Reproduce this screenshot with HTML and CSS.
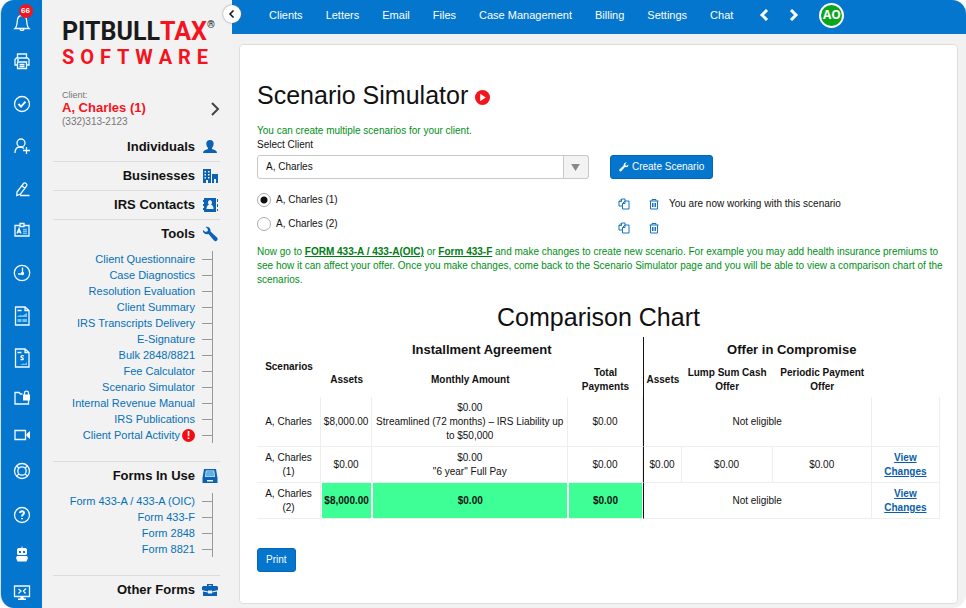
FILE: index.html
```html
<!DOCTYPE html>
<html lang="en">
<head>
<meta charset="utf-8">
<title>Scenario Simulator</title>
<link rel="stylesheet" href="styles.css">
</head>
<body>
<div class="app">
  <nav class="rail" aria-label="Shortcuts">
    <a href="#" class="bell" aria-label="Notifications"><svg viewBox="0 0 20 20"><path d="M3 17.500h14c-1.800-1.500-2-3.500-2.300-7.500C14.500 6.500 12.800 4.500 10 4.500S5.500 6.500 5.300 10C5 14 4.800 16 3 17.500zM8 18c.3 2 3.700 2 4 0M10 4.500V3"/></svg><span class="count">66</span></a>
    <a href="#" aria-label="Print"><svg viewBox="0 0 20 20"><path d="M5.500 7V3h9v4M5.500 14H3V8.500L4.500 7h11L17 8.500V14h-2.500M5.500 11h9v6.500h-9zM7.500 13.500h5M7.500 15.500h5M5 9h2"/></svg></a>
    <a href="#" aria-label="Tasks"><svg viewBox="0 0 20 20"><circle cx="10" cy="10" r="7.500"/><path class="bold" d="M6.500 10l2.500 2.600 4.500-5"/></svg></a>
    <a href="#" aria-label="Add client"><svg viewBox="0 0 20 20"><circle cx="9" cy="7" r="4"/><path d="M3 17c0-4 2-6 5-6 2 0 3 .5 4 1.500M11 14.500h7M14.500 11v7"/></svg></a>
    <a href="#" aria-label="Edit"><svg viewBox="0 0 20 20"><path d="M5 13l6.500-8.500c1.500-1.500 4.500.5 3 2.700L8.500 15l-3.700 1.500zM8 16.500h9.500M10 7l3 2.300"/></svg></a>
    <a href="#" aria-label="ID badge"><svg viewBox="0 0 20 20"><path d="M8 5.500H3V16h14V5.500h-5M8 3.500h4v3H8zM5 13.500l2-5 2 5M6 12h2"/><path class="faint" d="M11 9.500h4M11 11.500h4M11 13.500h4"/></svg></a>
    <a href="#" aria-label="Time"><svg viewBox="0 0 20 20"><circle cx="10" cy="10" r="7.700"/><path d="M10.500 4.500V11H6"/><circle cx="10.500" cy="10.500" r="1"/></svg></a>
    <a href="#" aria-label="Reports"><svg viewBox="0 0 20 20"><path d="M3.500 1h9.500l4 3.500V19H3.500zM13 1v3.500h4M5.500 4.500h4"/><path class="tint" d="M5.500 10l3-1 2 .5L15 7v4H5.500zM5.500 13h4v3h-4zM10.500 13h4.500v3h-4.500z"/></svg></a>
    <a href="#" aria-label="Billing report"><svg viewBox="0 0 20 20"><path d="M3.500 1h9.500l4 3.500V19H3.500zM13 1v3.500h4M12 8c-3-1.200-4 1-2 1.700s1.800 2.600-1.500 1.800M5.500 4.500h4"/><path class="tint" d="M8 17l3-1.500 2 .5 2-2v3z"/></svg></a>
    <a href="#" aria-label="Secure folder"><svg viewBox="0 0 20 20"><path d="M10.500 6H8.500L7 4.500H3V16h13.500v-4"/><path class="solid" d="M11 6.500h7v6h-7z"/><path d="M12.500 7V5c0-2.500 4-2.500 4 0v2"/></svg></a>
    <a href="#" aria-label="Video"><svg viewBox="0 0 20 20"><path d="M3 5.500h10.500v9H3z"/><path class="solid" d="M14.500 9l3.500-3v8l-3.500-3z"/></svg></a>
    <a href="#" aria-label="Support"><svg viewBox="0 0 20 20"><circle cx="10" cy="10" r="7.500"/><circle cx="10" cy="10" r="4.200"/><path d="M4.500 5l2.500 2M15.500 5L13 7M4.500 15L7 13M15.500 15L13 13"/></svg></a>
    <a href="#" aria-label="Help"><svg viewBox="0 0 20 20"><circle cx="10" cy="10" r="7.500"/><path class="bold" d="M8 8c.2-2.500 4.300-2.300 4 .2-.2 1.500-2 1.400-2 3.300M10 13v1.200"/></svg></a>
    <a href="#" aria-label="Assistant"><svg viewBox="0 0 20 20"><path class="solid" fill-rule="evenodd" d="M9.500 2.500h1V4H14l1 1.500v4.500l-1 1H6l-1-1V5.500L6 4h3.500zM7 7v2h2V7zM11 7v2h2V7z"/><path class="solid" d="M5 12h10l1 2-1.500 3.500h-9L4 14z"/></svg></a>
    <a href="#" aria-label="Screen share"><svg viewBox="0 0 20 20"><path d="M2.500 4h15v10.500h-15zM6.500 7l2.500 2-2.500 2.500M14 6.500L11.500 9l2 2.500"/><path class="solid" d="M9 14.500h2l1 2h2V18H6v-1.500h2z"/></svg></a>
  </nav>

  <aside class="sidebar">
    <button class="collapse" type="button" aria-label="Collapse menu"><svg viewBox="0 0 10 10"><path d="M6.500 1.500L3 5l3.500 3.500"/></svg></button>
    <div class="logo">
      <div class="logo-top">PITBULL<span class="red">TAX</span><sup>®</sup></div>
      <div class="logo-sub" role="img" aria-label="Software"><span>S</span><span>O</span><span>F</span><span>T</span><span>W</span><span>A</span><span>R</span><span>E</span></div>
    </div>
    <a href="#" class="client">
      <span class="client-text"><span class="client-label">Client:</span><strong>A, Charles (1)</strong><span class="phone">(332)313-2123</span></span>
      <svg class="go" viewBox="0 0 10 14"><path d="M2 1l6 6-6 6"/></svg>
    </a>
    <section><h2>Individuals <svg viewBox="0 0 16 16"><path d="M8 1c5 0 4 6 2 8v1c3 1 5 1.500 5 4H1c0-2.500 2-3 5-4V9C4 7 3 1 8 1z"/></svg></h2></section>
    <section><h2>Businesses <svg viewBox="0 0 16 16"><path fill-rule="evenodd" d="M1 1h8v14H6v-3H4v3H1zM2.500 3v1.500H4V3zM6 3v1.500h1.500V3zM2.500 6v1.500H4V6zM6 6v1.500h1.500V6zM2.500 9v1.500H4V9zM6 9v1.500h1.500V9zM10 6h6v9h-2v-4h-2v4h-2z"/></svg></h2></section>
    <section><h2>IRS Contacts <svg viewBox="0 0 16 16"><path fill-rule="evenodd" d="M2 1h12v14H2v-2H1v-2h1V9H1V7h1V5H1V3h1zM8 3a2.500 2.500 0 0 0-1 4.500C5 8.500 4.500 10 4.500 12h7c0-2-.5-3.500-2.500-4.500A2.500 2.500 0 0 0 8 3z"/><path d="M15 2h1v3h-1zM15 7h1v3h-1zM15 12h1v2h-1z"/></svg></h2></section>
    <section>
      <h2>Tools <svg viewBox="0 0 16 16"><path d="M1 4l2.500 2L6 5 5.500 2.500 3.500 1C6 0 9 2 8.500 5.500l6.500 6c2 2-1 5-3 3L6.500 8C3.500 9 .5 7 1 4z"/></svg></h2>
      <ul>
        <li><a href="#">Client Questionnaire</a></li>
        <li><a href="#">Case Diagnostics</a></li>
        <li><a href="#">Resolution Evaluation</a></li>
        <li><a href="#">Client Summary</a></li>
        <li><a href="#">IRS Transcripts Delivery</a></li>
        <li><a href="#">E-Signature</a></li>
        <li><a href="#">Bulk 2848/8821</a></li>
        <li><a href="#">Fee Calculator</a></li>
        <li><a href="#">Scenario Simulator</a></li>
        <li><a href="#">Internal Revenue Manual</a></li>
        <li><a href="#">IRS Publications</a></li>
        <li><a href="#">Client Portal Activity</a><span class="alert">!</span></li>
      </ul>
    </section>
    <section>
      <h2>Forms In Use <svg viewBox="0 0 16 16"><path fill-rule="evenodd" d="M2 1h12l1.500 9v5H.5v-5zM3.800 2.500L3 9h10l-.8-6.500zM5 12v1.500h6V12z"/><path class="sheet" d="M4.500 3h7l.8 5.500H3.700z"/></svg></h2>
      <ul>
        <li><a href="#">Form 433-A / 433-A (OIC)</a></li>
        <li><a href="#">Form 433-F</a></li>
        <li><a href="#">Form 2848</a></li>
        <li><a href="#">Form 8821</a></li>
      </ul>
    </section>
    <section><h2>Other Forms <svg viewBox="0 0 16 16"><path fill-rule="evenodd" d="M5 4V2h6v2h4l1 1v3l-6 1.500V8.500H6v1L0 8V5l1-1zM6.500 4h3V3.200h-3zM1 9.500l5 1v1h4v-1l5-1V14H1z"/></svg></h2></section>
  </aside>

  <div class="content">
    <header class="topbar">
      <a href="#">Clients</a><a href="#">Letters</a><a href="#">Email</a><a href="#">Files</a><a href="#">Case Management</a><a href="#">Billing</a><a href="#">Settings</a><a href="#">Chat</a>
      <div class="tools">
        <button type="button" class="arrow" aria-label="Previous"><svg viewBox="0 0 10 12"><path d="M8 1L3 6l5 5"/></svg></button>
        <button type="button" class="arrow" aria-label="Next"><svg viewBox="0 0 10 12"><path d="M2 1l5 5-5 5"/></svg></button>
        <button type="button" class="avatar">AO</button>
      </div>
    </header>
    <main class="panel">
      <h1>Scenario Simulator <svg viewBox="0 0 16 16"><circle cx="8" cy="8" r="8"/><path d="M5.500 4l6 4-6 4z"/></svg></h1>
      <p class="note">You can create multiple scenarios for your client.</p>
      <label for="client">Select Client</label>
      <div class="picker">
        <div class="select">
          <select id="client"><option>A, Charles</option></select>
          <span class="drop"><svg viewBox="0 0 10 8"><path d="M0 0h10L5 8z"/></svg></span>
        </div>
        <button type="button" class="btn"><svg viewBox="0 0 16 16"><path d="M15 4l-2.500 2L10 5l.5-2.500L12.500 1C10 0 7 2 7.500 5.500l-6.500 6c-2 2 1 5 3 3L9.500 8C12.500 9 15.500 7 15 4z"/></svg>Create Scenario</button>
      </div>
      <div class="scenarios">
        <div class="choices">
          <label><input type="radio" name="scenario" checked>A, Charles (1)</label>
          <label><input type="radio" name="scenario">A, Charles (2)</label>
        </div>
        <div class="actions">
          <div class="action-row">
            <button type="button" aria-label="Copy scenario 1"><svg viewBox="0 0 12 12"><path d="M4.500 8H1V3.500L3.500 1H7v2M3.500 1v2.500H1M4.500 5.500L7 3h4v8H4.500zM7 3v2.500H4.500"/></svg></button>
            <button type="button" aria-label="Delete scenario 1"><svg viewBox="0 0 12 12"><path d="M1.500 3h9M4 3V1.500h4V3M2.500 3v8h7V3M4.500 5v4M6 5v4M7.500 5v4"/></svg></button>
            <span>You are now working with this scenario</span>
          </div>
          <div class="action-row">
            <button type="button" aria-label="Copy scenario 2"><svg viewBox="0 0 12 12"><path d="M4.500 8H1V3.500L3.500 1H7v2M3.500 1v2.500H1M4.500 5.500L7 3h4v8H4.500zM7 3v2.500H4.500"/></svg></button>
            <button type="button" aria-label="Delete scenario 2"><svg viewBox="0 0 12 12"><path d="M1.500 3h9M4 3V1.500h4V3M2.500 3v8h7V3M4.500 5v4M6 5v4M7.500 5v4"/></svg></button>
          </div>
        </div>
      </div>
      <p class="note wide">Now go to <a href="#">FORM 433-A / 433-A(OIC)</a> or <a href="#">Form 433-F</a> and make changes to create new scenario. For example you may add health insurance premiums to see how it can affect your offer. Once you make changes, come back to the Scenario Simulator page and you will be able to view a comparison chart of the scenarios.</p>
      <h2 class="chart-title">Comparison Chart</h2>
      <table>
        <colgroup><col class="c-name"><col class="c-assets"><col class="c-monthly"><col class="c-total"><col class="c-offer"><col class="c-lump"><col class="c-periodic"><col class="c-view"></colgroup>
        <thead>
          <tr class="groups"><th rowspan="2">Scenarios</th><th colspan="3" class="group">Installment Agreement</th><th colspan="4" class="group divide">Offer in Compromise</th></tr>
          <tr class="heads"><th>Assets</th><th>Monthly Amount</th><th>Total Payments</th><th class="divide">Assets</th><th>Lump Sum Cash Offer</th><th>Periodic Payment Offer</th><td></td></tr>
        </thead>
        <tbody>
          <tr><td>A, Charles</td><td>$8,000.00</td><td>$0.00<br>Streamlined (72 months) – IRS Liability up to $50,000</td><td>$0.00</td><td colspan="3" class="divide">Not eligible</td><td></td></tr>
          <tr><td>A, Charles (1)</td><td>$0.00</td><td>$0.00<br>"6 year" Full Pay</td><td>$0.00</td><td class="divide">$0.00</td><td>$0.00</td><td>$0.00</td><td><a href="#">View Changes</a></td></tr>
          <tr><td>A, Charles (2)</td><td class="best">$8,000.00</td><td class="best">$0.00</td><td class="best">$0.00</td><td colspan="3" class="divide">Not eligible</td><td><a href="#">View Changes</a></td></tr>
        </tbody>
      </table>
      <button type="button" class="btn">Print</button>
    </main>
  </div>
</div>
</body>
</html>
```
FILE: styles.css
```css
* { box-sizing: border-box; }
body {
  margin: 0;
  background: #fff;
  color: #111;
  font: 10px/14px "Liberation Sans", Arial, sans-serif;
}
a { color: #0571b8; text-decoration: none; }
button { font: inherit; border: 0; padding: 0; background: none; cursor: pointer; }
h1, h2, p, ul { margin: 0; padding: 0; }
svg { display: block; flex: none; }

.app {
  display: flex;
  min-height: 100vh;
  border-left: 1px solid #d8e2ea;
  border-radius: 14px;
  overflow: hidden;
  background: #f1f1f1;
}

/* icon rail */
.rail {
  flex: none;
  width: 41px;
  padding-top: 11px;
  display: grid;
  grid-template-rows: 40px 43px 42px 43px 41px 43px 43px 42px 40px 37px 36px 44px 39px 38px 20px;
  align-content: start;
  justify-content: center;
  background: #0576cd;
}
.rail a { position: relative; height: 20px; }
.rail svg { width: 20px; height: 20px; fill: none; stroke: #f2faff; stroke-width: 1.3; }
.rail .bold { stroke-width: 2; }
.rail .faint { stroke: #6fc3f7; }
.rail .solid { fill: #fff; stroke: none; }
.rail .tint { fill: #6fc3f7; stroke: none; }
.count {
  position: absolute;
  top: -7px;
  right: -1px;
  width: 14px;
  height: 14px;
  border-radius: 50%;
  background: #ee1622;
  color: #fff;
  font-size: 8px;
  font-weight: bold;
  text-align: center;
}

/* sidebar */
.sidebar {
  position: relative;
  flex: none;
  width: 190px;
  padding: 18px 12px 0 11px;
  background: #f2f2f2;
}
.collapse {
  position: absolute;
  top: 5px;
  right: -9px;
  width: 18px;
  height: 18px;
  border-radius: 50%;
  background: #fff;
  box-shadow: 0 0 2px #777;
}
.collapse svg { width: 10px; height: 10px; margin: auto; fill: none; stroke: #111; stroke-width: 1.5; }
.logo { width: 155px; padding-left: 9px; font-family: Roboto, "Liberation Sans", sans-serif; font-weight: bold; }
.logo-top { display: flex; font-size: 25px; line-height: 28px; color: #1a1a1a; white-space: nowrap; }
.logo-top sup { font-size: 10px; line-height: 14px; }
.red { color: #f5131d; }
.logo-sub { display: flex; justify-content: space-between; font-size: 20px; line-height: 22px; color: #f5131d; }
.client { display: flex; align-items: center; justify-content: space-between; margin-top: 20px; padding-left: 9px; height: 42px; color: #777; }
.client-text { display: grid; }
.client-label { font-size: 9px; line-height: 12px; }
.client strong { font-size: 13px; line-height: 14px; color: #f5131d; }
.go { width: 10px; height: 14px; fill: none; stroke: #444; stroke-width: 2; }
.sidebar section + section { border-top: 1px solid #dcdcdc; }
.sidebar h2 {
  display: flex;
  align-items: center;
  justify-content: flex-end;
  gap: 7px;
  height: 28px;
  padding-right: 2px;
  font-size: 13px;
}
.client + section { margin-top: 3px; }
.sidebar h2 svg { width: 16px; height: 16px; fill: #0b62b4; }
.sidebar h2 .sheet { fill: #5fb0e6; }
.sidebar ul { list-style: none; margin: 3px 7px 18px 0; border-right: 1px solid #999; }
.sidebar li { display: flex; align-items: center; justify-content: flex-end; height: 16px; font-size: 11px; }
.sidebar li::after { content: ""; width: 10px; margin-left: 7px; border-top: 1px solid #999; }
.alert { width: 13px; height: 13px; margin-left: 2px; border-radius: 50%; background: #f20d14; color: #fff; font-weight: bold; line-height: 13px; text-align: center; }

/* content */
.content { flex: 1; min-width: 0; display: flex; flex-direction: column; }
.topbar {
  display: flex;
  align-items: center;
  gap: 23px;
  height: 34px;
  padding: 0 37px 4px;
  background: #0576cd;
  font-size: 11px;
}
.topbar a { color: #fff; white-space: nowrap; }
.tools { display: flex; align-items: center; gap: 20px; padding-left: 3px; }
.arrow svg { width: 10px; height: 12px; fill: none; stroke: #fff; stroke-width: 3; }
.avatar { width: 25px; height: 25px; border: 2px solid #fff; border-radius: 50%; background: #0da51c; color: #fff; font: bold 12px/20px "Open Sans", sans-serif; }
.panel {
  flex: 1;
  margin: 10px 8px 4px 7px;
  padding: 35px 17px 20px;
  border: 1px solid #dedede;
  border-radius: 4px;
  background: #fff;
}
h1 { display: flex; align-items: center; gap: 7px; font-size: 25px; line-height: 30px; font-weight: normal; margin-bottom: 14px; }
h1 svg { width: 15px; height: 15px; margin-top: 4px; fill: #f5131d; }
h1 svg path { fill: #fff; }
.note { color: #008f16; }
.note.wide { margin-right: -13px; }
.note a { color: #007d12; font-weight: bold; text-decoration: underline; }
.picker { display: flex; gap: 21px; margin-top: 3px; }
.select, .scenarios .choices { flex: none; width: 48.600%; }
.select { display: grid; }
.select select, .drop { grid-area: 1 / 1; }
.select select { appearance: none; width: 100%; height: 24px; padding: 0 8px; border: 1px solid #c9c9c9; border-radius: 3px; background: #fff; color: #111; font: inherit; }
.drop { justify-self: end; display: grid; place-items: center; width: 26px; border: 1px solid #c9c9c9; border-radius: 0 3px 3px 0; background: #f3f3f3; pointer-events: none; }
.drop svg { width: 9px; height: 7px; fill: #888; }
.btn { display: inline-flex; align-items: center; gap: 3px; height: 24px; padding: 0 8px; border: 1px solid #0567b4; border-radius: 3px; background: #0576cd; color: #fff; }
.btn svg { width: 10px; height: 10px; fill: #fff; }
.scenarios { display: flex; gap: 29px; margin: 9px 0 5px; }
.choices label { display: flex; align-items: center; gap: 5px; height: 24px; }
.choices input { appearance: none; width: 14px; height: 14px; margin: 0; border: 1px solid #aaa; border-radius: 50%; }
.choices input:checked { background: radial-gradient(circle, #111 3px, #fff 4px); }
.actions { padding-top: 4px; }
.action-row { display: flex; align-items: center; height: 24px; }
.action-row button { width: 12px; margin-right: 18px; }
.action-row button + button { margin-right: 9px; }
.action-row svg { width: 12px; height: 12px; fill: none; stroke: #1874bd; }
.chart-title { margin: 15px 0 5px; font-size: 25px; line-height: 30px; font-weight: normal; text-align: center; }

table { width: 100%; table-layout: fixed; border-collapse: separate; border-spacing: 0; margin-bottom: 29px; text-align: center; }
.c-name { width: 64px; }
.c-assets { width: 51px; }
.c-monthly { width: 196px; }
.c-total { width: 74px; }
.c-offer { width: 39px; }
.c-lump { width: 91px; }
.c-periodic { width: 99px; }
.c-view { width: 68px; }
th, td { padding: 3px; }
.groups { height: 26px; }
.heads { height: 34px; }
th.group { font-size: 13px; }
tbody td { padding: 4px 2px 3px; border-right: 1px solid #eee; border-bottom: 1px solid #eee; }
tbody td:first-child, tbody td:last-child { padding-left: 8px; padding-right: 8px; }
.divide { border-left: 1px solid #111; }
tbody .best { border-left: 1px solid #fff; border-right-color: #fff; background: #3dff96 padding-box; font-weight: bold; }
td a { color: #0a5ea8; font-weight: bold; text-decoration: underline; }
```
